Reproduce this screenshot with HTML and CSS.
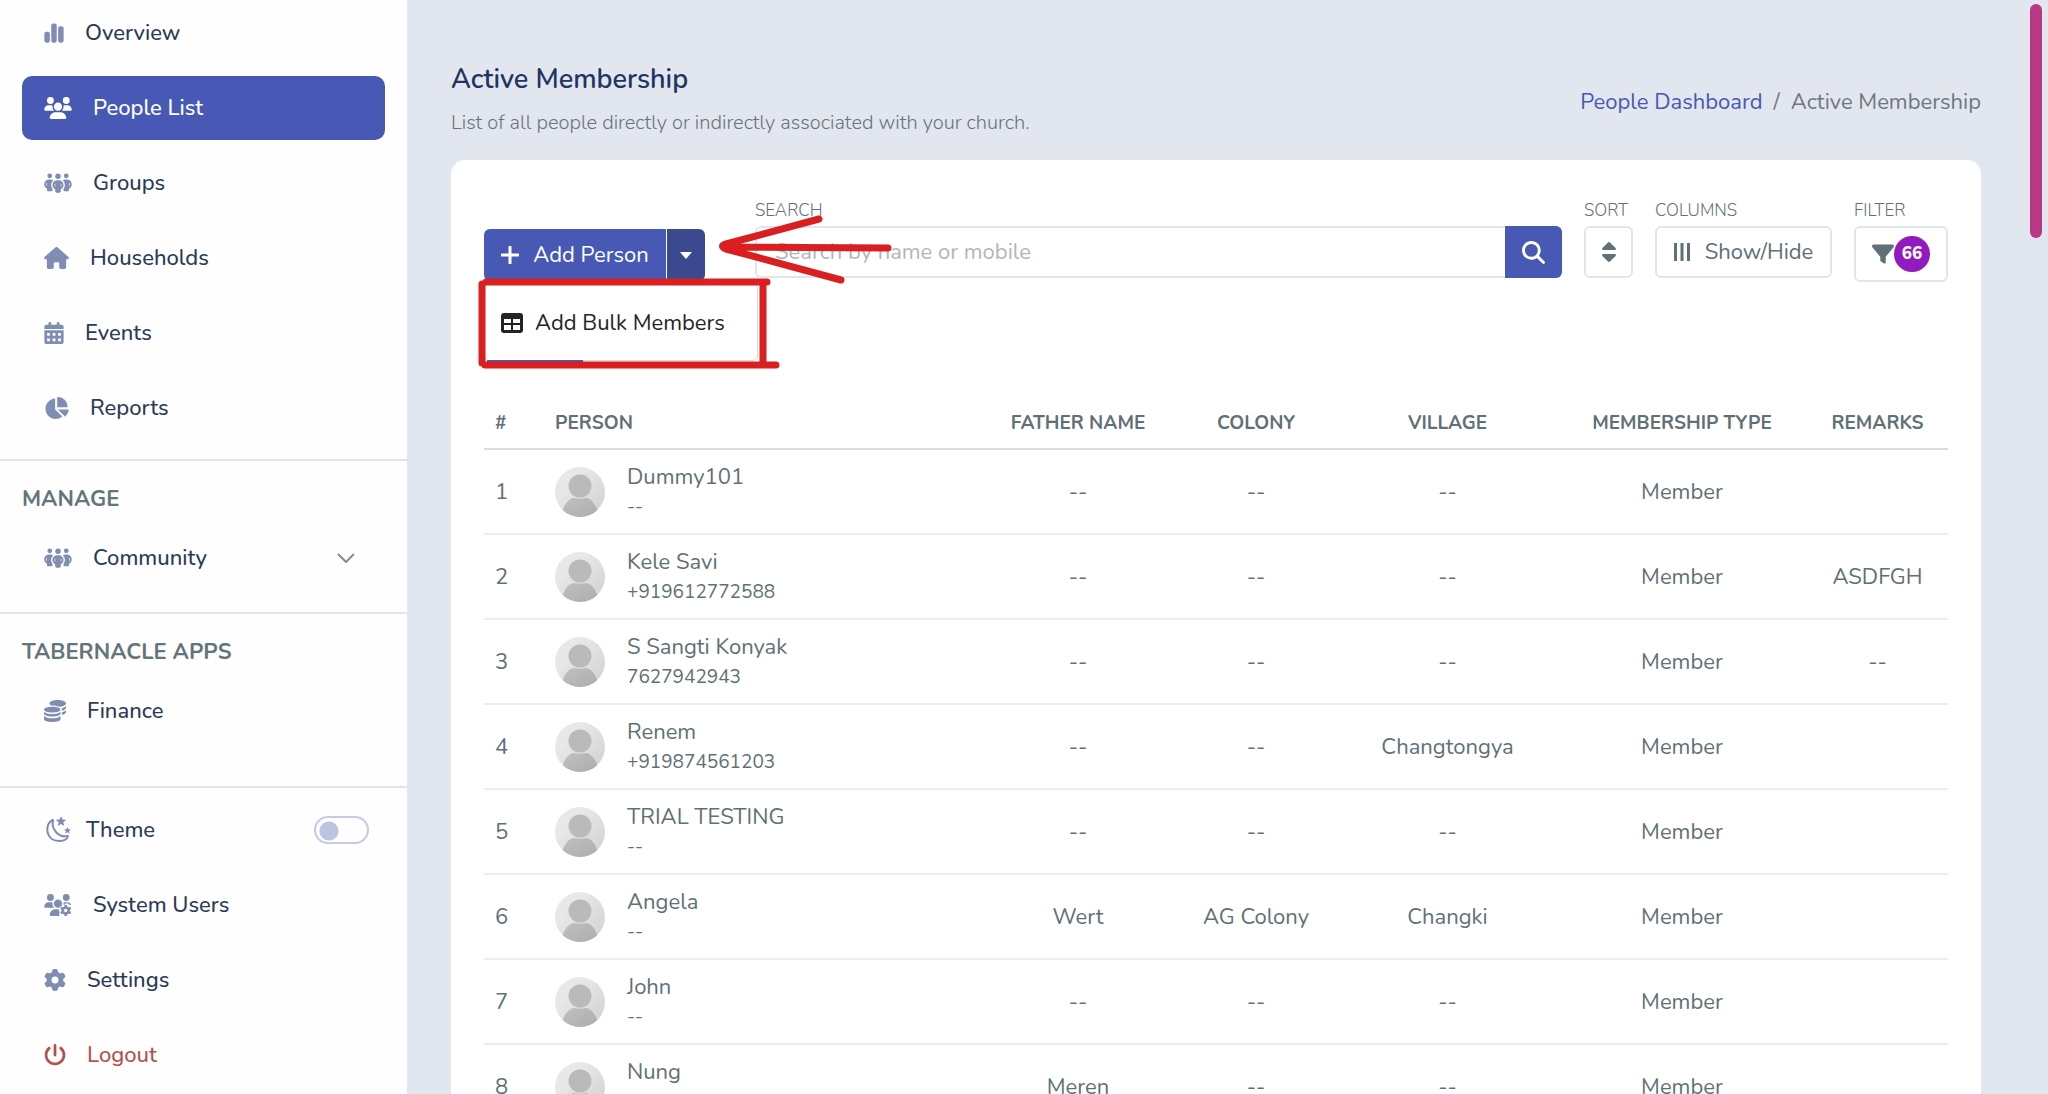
FILE: index.html
```html
<!DOCTYPE html>
<html lang="en">
<head>
    <meta charset="utf-8">
    <title>Active Membership</title>
    <link rel="stylesheet" href="styles.css">
</head>
<body>
    <!-- Icons shared by the page -->
    <svg class="sprite" aria-hidden="true">
        <defs>
            <linearGradient id="avatarBg" x1="0" y1="0" x2="1" y2="1">
                <stop offset="0.3" stop-color="#e8e8e8"/>
                <stop offset="1" stop-color="#d0d0d0"/>
            </linearGradient>
            <linearGradient id="avatarFg" x1="0" y1="0" x2="1" y2="1">
                <stop offset="0" stop-color="#c0c0c0"/>
                <stop offset="1" stop-color="#acacac"/>
            </linearGradient>
            <clipPath id="avatarClip"><circle cx="25" cy="25" r="25"/></clipPath>
        </defs>
        <symbol id="avatar" viewBox="0 0 50 50">
            <circle cx="25" cy="25" r="25" fill="url(#avatarBg)"/>
            <g clip-path="url(#avatarClip)">
                <circle cx="25" cy="19" r="11.5" fill="#bababa"/>
                <path fill="url(#avatarFg)" d="M7 46C9 37 14 31.500 19 31q6 1.500 12 0c5 .5 10 6 12 15l-8 6H15z"/>
            </g>
        </symbol>
        <symbol id="people-group" viewBox="0 0 640 512">
            <path d="M72 88a56 56 0 1 1 112 0A56 56 0 1 1 72 88zM64 245.7C54 256.9 48 271.8 48 288s6 31.100 16 42.300V245.700zm144.400-49.300C178.700 222.700 160 261.200 160 304c0 34.300 12 65.800 32 90.500V416c0 17.700-14.300 32-32 32H96c-17.700 0-32-14.300-32-32V389.200C26.200 371.200 0 332.700 0 288c0-61.900 50.100-112 112-112h32c24 0 46.200 7.500 64.400 20.300zM448 416V394.500c20-24.700 32-56.200 32-90.500c0-42.800-18.700-81.300-48.400-107.700C449.800 183.500 472 176 496 176h32c61.900 0 112 50.100 112 112c0 44.700-26.200 83.200-64 101.200V416c0 17.700-14.300 32-32 32H480c-17.700 0-32-14.300-32-32zm8-328a56 56 0 1 1 112 0A56 56 0 1 1 456 88zM576 245.700v84.700c10-11.300 16-26.100 16-42.300s-6-31.100-16-42.300zM320 32a64 64 0 1 1 0 128 64 64 0 1 1 0-128zM240 304c0 16.200 6 31 16 42.300V261.700c-10 11.300-16 26.100-16 42.300zm144-42.300v84.700c10-11.300 16-26.100 16-42.300s-6-31.100-16-42.300zM448 304c0 44.700-26.200 83.200-64 101.200V448c0 17.700-14.300 32-32 32H288c-17.700 0-32-14.300-32-32V405.200c-37.800-18-64-56.500-64-101.200c0-61.900 50.100-112 112-112h32c61.900 0 112 50.100 112 112z"/>
        </symbol>
    </svg>

    <div class="layout">
        <aside class="sidebar">
            <nav class="nav">
                <a href="#" class="nav-link">
                    <svg class="icon icon-sm" viewBox="0 0 448 512"><path d="M160 80c0-26.500 21.500-48 48-48h32c26.500 0 48 21.500 48 48v352c0 26.500-21.500 48-48 48h-32c-26.500 0-48-21.500-48-48V80zM0 272c0-26.500 21.500-48 48-48h32c26.500 0 48 21.500 48 48v160c0 26.500-21.500 48-48 48H48c-26.500 0-48-21.500-48-48V272zM368 96h32c26.500 0 48 21.500 48 48v288c0 26.500-21.500 48-48 48h-32c-26.500 0-48-21.500-48-48V144c0-26.500 21.500-48 48-48z"/></svg>
                    Overview
                </a>
                <a href="#" class="nav-link active">
                    <svg class="icon icon-xl" viewBox="0 0 640 512"><path d="M144 0a80 80 0 1 1 0 160A80 80 0 1 1 144 0zM512 0a80 80 0 1 1 0 160A80 80 0 1 1 512 0zM0 298.700C0 239.800 47.800 192 106.700 192h42.700c15.900 0 31 3.500 44.600 9.700c-1.300 7.200-1.900 14.700-1.900 22.300c0 38.200 16.800 72.500 43.300 96H21.300C9.600 320 0 310.400 0 298.700zM405.300 320c26.600-23.500 43.300-57.800 43.300-96c0-7.600-.7-15-1.900-22.300c13.600-6.300 28.700-9.700 44.600-9.700h42.700C592.200 192 640 239.800 640 298.700c0 11.800-9.600 21.300-21.300 21.300H405.300zM224 224a96 96 0 1 1 192 0 96 96 0 1 1 -192 0zM128 485.300C128 411.700 187.700 352 261.300 352H378.700C452.300 352 512 411.700 512 485.300c0 14.700-11.900 26.700-26.700 26.700H154.700c-14.700 0-26.700-11.900-26.700-26.700z"/></svg>
                    People List
                </a>
                <a href="#" class="nav-link">
                    <svg class="icon icon-xl"><use href="#people-group"/></svg>
                    Groups
                </a>
                <a href="#" class="nav-link">
                    <svg class="icon icon-lg" viewBox="0 0 576 512"><path d="M575.800 255.500c0 18-15 32.100-32 32.100h-32l.7 160.200c0 2.700-.2 5.400-.5 8.100V472c0 22.100-17.900 40-40 40H392c-22.100 0-40-17.900-40-40V384c0-17.700-14.300-32-32-32H256c-17.700 0-32 14.300-32 32v88c0 22.100-17.900 40-40 40H104c-22.100 0-40-17.900-40-40V287.600H32c-18 0-32-14-32-32.100c0-9 3-17 10-24L266.400 8c7-7 15-8 22-8s15 2 21 7L564.800 231.500c8 7 12 15 11 24z"/></svg>
                    Households
                </a>
                <a href="#" class="nav-link">
                    <svg class="icon icon-sm" viewBox="0 0 448 512"><path fill-rule="evenodd" d="M128 0c17.700 0 32 14.300 32 32v32h128V32c0-17.700 14.300-32 32-32s32 14.300 32 32v32h48c26.500 0 48 21.500 48 48v48H0v-48c0-26.500 21.500-48 48-48h48V32c0-17.700 14.300-32 32-32zM0 192h448v272c0 26.500-21.500 48-48 48H48c-26.500 0-48-21.500-48-48zM64 256v64h64v-64zM192 256v64h64v-64zM320 256v64h64v-64zM64 384v64h64v-64zM192 384v64h64v-64zM320 384v64h64v-64z"/></svg>
                    Events
                </a>
                <a href="#" class="nav-link">
                    <svg class="icon icon-lg" viewBox="0 0 576 512"><path d="M304 240V16.600c0-9 7-16.600 16-16.600C443.700 0 544 100.300 544 224c0 9-7.600 16-16.600 16H304zM32 272C32 150.700 122.100 50.300 239 34.300c9.200-1.300 17 6.100 17 15.400V288L412.500 444.500c6.700 6.700 6.200 17.700-1.500 23.100C371.800 495.600 323.800 512 272 512C139.500 512 32 404.600 32 272zm526.400 16c9.300 0 16.600 7.800 15.400 17c-7.700 55.900-34.600 105.600-73.900 142.300c-6 5.600-15.400 5.200-21.200-.7L320 288H558.400z"/></svg>
                    Reports
                </a>
            </nav>

            <div class="nav-section">
                <h2 class="nav-heading">MANAGE</h2>
                <a href="#" class="nav-link">
                    <svg class="icon icon-xl"><use href="#people-group"/></svg>
                    Community
                    <svg class="chevron" viewBox="0 0 18 10"><path d="M1 1l8 8 8-8"/></svg>
                </a>
            </div>

            <div class="nav-section apps">
                <h2 class="nav-heading">TABERNACLE APPS</h2>
                <a href="#" class="nav-link">
                    <svg class="icon" viewBox="0 0 512 512"><path d="M512 80c0 18-14.300 34.600-38.400 48c-29.100 16.100-72.500 27.500-122.300 30.900c-3.700-1.800-7.400-3.500-11.300-5C300.600 137.400 248.200 128 192 128c-8.300 0-16.400 .2-24.500 .6l-1.100-.6C142.300 114.600 128 98 128 80c0-44.200 86-80 192-80S512 35.800 512 80zM384 224c0 36-86 66-192 66S0 260 0 224s86-66 192-66 192 30 192 66zM0 274c36 36 108 54 192 54s156-18 192-54v40c0 40-86 72-192 72S0 354 0 314zM0 372c36 36 108 54 192 54s156-18 192-54v68c0 40-86 72-192 72S0 480 0 440zM416 190c40-9 74-24 96-44v34c0 30-37 55-96 69zM416 286c40-9 74-24 96-44v38c0 30-37 55-96 69z"/></svg>
                    Finance
                </a>
            </div>

            <div class="nav-section nav">
                <div class="nav-link">
                    <svg class="icon icon-theme" viewBox="0 0 27 30"><path class="moon" d="M9 5C0 8 1 27 16 26c4 0 7-2 8-5C15 23 7 15 9 5z"/><path d="M17 1l1.400 3.600 3.900.2-3 2.500 1 3.800L17 9l-3.300 2.100 1-3.800-3-2.500 3.900-.2zM23.500 12l1 2.300 2.500.2-1.900 1.600.6 2.400-2.200-1.300-2.200 1.300.6-2.400-1.900-1.600 2.500-.2z"/></svg>
                    <label for="themeSwitch">Theme</label>
                    <input type="checkbox" id="themeSwitch" class="switch">
                </div>
                <a href="#" class="nav-link">
                    <svg class="icon icon-xl" viewBox="0 0 640 512"><path fill-rule="evenodd" d="M144 0a80 80 0 1 1 0 160A80 80 0 1 1 144 0zM512 0a80 80 0 1 1 0 160A80 80 0 1 1 512 0zM0 298.700C0 239.800 47.800 192 106.700 192h42.700c15.900 0 31 3.500 44.600 9.700c-8 45 5 86 41.400 118.300H21.300C9.600 320 0 310.400 0 298.700zM446 202c14-6 29-10 45-10h43c40 0 74 18 92 50l-24 12-32-10-10-24h-70l-10 24-30 10zM224 224a96 96 0 1 1 192 0 96 96 0 1 1-192 0zM261 352h80c-9 28 3 48 26 64-22 22-27 50-10 96H155c-15 0-27-12-27-27 0-73 60-133 133-133zM472 256h56l8 40 24 14 38-13 28 48-30 27v24l30 27-28 48-38-13-24 14-8 40h-56l-8-40-24-14-38 13-28-48 30-27v-24l-30-27 28-48 38 13 24-14zM500 344a40 40 0 1 0 0 80 40 40 0 1 0 0-80z"/></svg>
                    System Users
                </a>
                <a href="#" class="nav-link">
                    <svg class="icon" viewBox="0 0 512 512"><path d="M495.900 166.600c3.200 8.700 .5 18.400-6.400 24.600l-43.300 39.400c1.100 8.300 1.700 16.800 1.700 25.400s-.6 17.100-1.700 25.400l43.300 39.400c6.900 6.200 9.600 15.900 6.400 24.600c-4.400 11.900-9.700 23.300-15.800 34.300l-4.700 8.100c-6.600 11-14 21.400-22.100 31.200c-5.900 7.200-15.700 9.600-24.500 6.800l-55.700-17.700c-13.400 10.300-28.200 18.900-44 25.400l-12.500 57.100c-2 9.100-9 16.300-18.200 17.800c-13.800 2.300-28 3.500-42.500 3.500s-28.700-1.200-42.500-3.500c-9.200-1.500-16.200-8.700-18.200-17.800l-12.500-57.100c-15.800-6.500-30.600-15.100-44-25.400L83.100 425.900c-8.800 2.800-18.600 .3-24.500-6.800c-8.100-9.800-15.500-20.200-22.100-31.200l-4.700-8.100c-6.100-11-11.400-22.400-15.800-34.300c-3.200-8.700-.5-18.400 6.400-24.600l43.300-39.400C64.600 273.100 64 264.600 64 256s.6-17.100 1.700-25.400L22.400 191.200c-6.900-6.200-9.600-15.900-6.400-24.600c4.400-11.900 9.700-23.300 15.800-34.300l4.700-8.100c6.600-11 14-21.400 22.100-31.200c5.900-7.200 15.700-9.600 24.500-6.800l55.700 17.700c13.400-10.300 28.200-18.900 44-25.400l12.500-57.100c2-9.100 9-16.300 18.200-17.800C227.300 1.200 241.500 0 256 0s28.700 1.200 42.500 3.500c9.200 1.500 16.200 8.700 18.200 17.800l12.500 57.100c15.800 6.500 30.600 15.100 44 25.400l55.700-17.700c8.800-2.800 18.600-.3 24.500 6.800c8.100 9.800 15.500 20.200 22.100 31.200l4.700 8.100c6.100 11 11.400 22.400 15.800 34.300zM256 336a80 80 0 1 0 0-160 80 80 0 1 0 0 160z"/></svg>
                    Settings
                </a>
                <a href="#" class="nav-link logout">
                    <svg class="icon" viewBox="0 0 512 512"><path d="M288 32c0-17.700-14.300-32-32-32s-32 14.300-32 32V256c0 17.700 14.300 32 32 32s32-14.300 32-32V32zM143.500 120.600c13.600-11.300 15.400-31.500 4.100-45.100s-31.500-15.400-45.100-4.100C49.700 115.400 16 181.800 16 256c0 132.500 107.500 240 240 240s240-107.500 240-240c0-74.200-33.800-140.600-86.600-184.600c-13.600-11.300-33.800-9.400-45.100 4.100s-9.400 33.800 4.100 45.100c38.900 32.300 63.500 81 63.500 135.400c0 97.200-78.800 176-176 176s-176-78.800-176-176c0-54.400 24.700-103.100 63.500-135.400z"/></svg>
                    Logout
                </a>
            </div>
        </aside>

        <main class="main">
            <header class="page-header">
                <div>
                    <h1>Active Membership</h1>
                    <p>List of all people directly or indirectly associated with your church.</p>
                </div>
                <nav class="breadcrumb">
                    <a href="#">People Dashboard</a>
                    <span>/</span>
                    <span>Active Membership</span>
                </nav>
            </header>

            <section class="card">
                <div class="toolbar">
                    <div class="add-group">
                        <button type="button" class="btn-add">
                            <svg class="plus" viewBox="0 0 18 18"><path d="M9 1v16M1 9h16"/></svg>
                            Add Person
                        </button>
                        <button type="button" class="btn-caret" aria-label="More options">
                            <svg viewBox="0 0 12 7"><path d="M0 0h12L6 7z"/></svg>
                        </button>
                        <div class="dropdown">
                            <a href="#" class="dropdown-item">
                                <svg viewBox="0 0 22 20"><path fill-rule="evenodd" d="M3 0h16a3 3 0 0 1 3 3v14a3 3 0 0 1-3 3H3a3 3 0 0 1-3-3V3a3 3 0 0 1 3-3zM3 6v4h7V6zM12 6v4h7V6zM3 12v5h7v-5zM12 12v5h7v-5z"/></svg>
                                Add Bulk Members
                            </a>
                        </div>
                    </div>

                    <div class="field search">
                        <label for="search">SEARCH</label>
                        <div class="search-box">
                            <input type="text" id="search" placeholder="Search by name or mobile">
                            <button type="button" aria-label="Search">
                                <svg viewBox="0 0 512 512"><path d="M416 208c0 45.900-14.900 88.300-40 122.700L502.600 457.400c12.500 12.500 12.500 32.800 0 45.300s-32.800 12.500-45.300 0L330.700 376c-34.400 25.200-76.800 40-122.700 40C93.100 416 0 322.900 0 208S93.100 0 208 0S416 93.100 416 208zM208 352a144 144 0 1 0 0-288 144 144 0 1 0 0 288z"/></svg>
                            </button>
                        </div>
                    </div>
                    <div class="field">
                        <label for="sortBtn">SORT</label>
                        <button type="button" id="sortBtn" class="btn-outline sort">
                            <svg viewBox="0 0 14 20"><path d="M1 8q-1.500-.5-.6-2L6 .5q1-.8 2 0L13.600 6q.9 1.500-.6 2zM1 12q-1.500.5-.6 2L6 19.500q1 .8 2 0l5.600-5.500q.9-1.500-.6-2z"/></svg>
                        </button>
                    </div>
                    <div class="field">
                        <label for="columnsBtn">COLUMNS</label>
                        <button type="button" id="columnsBtn" class="btn-outline columns">
                            <svg viewBox="0 0 16 18"><path d="M0 0h3v18H0zM6.500 0h3v18h-3zM13 0h3v18h-3z"/></svg>
                            Show/Hide
                        </button>
                    </div>
                    <div class="field">
                        <label for="filterBtn">FILTER</label>
                        <button type="button" id="filterBtn" class="btn-outline filter">
                            <svg viewBox="0 0 512 512"><path d="M3.900 54.900C10.500 40.900 24.500 32 40 32H472c15.500 0 29.500 8.900 36.100 22.900s4.600 30.500-5.200 42.500L320 320.900V448c0 12.100-6.800 23.200-17.700 28.600s-23.800 4.300-33.500-3l-64-48c-8.100-6-12.800-15.500-12.800-25.600V320.900L9 97.300C-.7 85.400-2.800 68.800 3.900 54.900z"/></svg>
                            <span class="badge">66</span>
                        </button>
                    </div>

                    <!-- Hand-drawn marks over the toolbar -->
                    <svg class="marks" viewBox="0 0 420 190" aria-hidden="true">
                        <path d="M338 59L245 84q-7 2 0 5L360 120M243 87L407 88"/>
                        <path d="M1 124V203M5 122H286M282 124V204M4 205H295"/>
                    </svg>
                </div>

                <table>
                    <colgroup>
                        <col class="col-num">
                        <col>
                        <col class="col-father">
                        <col class="col-colony">
                        <col class="col-village">
                        <col class="col-type">
                        <col class="col-remarks">
                    </colgroup>
                    <thead>
                        <tr><th>#</th><th>PERSON</th><th>FATHER NAME</th><th>COLONY</th><th>VILLAGE</th><th>MEMBERSHIP TYPE</th><th>REMARKS</th></tr>
                    </thead>
                    <tbody>
                        <tr>
                            <td>1</td>
                            <td><div class="person"><svg class="avatar"><use href="#avatar"/></svg><div><div class="name">Dummy101</div><div class="phone">--</div></div></div></td>
                            <td>--</td><td>--</td><td>--</td><td>Member</td><td></td>
                        </tr>
                        <tr>
                            <td>2</td>
                            <td><div class="person"><svg class="avatar"><use href="#avatar"/></svg><div><div class="name">Kele Savi</div><div class="phone">+919612772588</div></div></div></td>
                            <td>--</td><td>--</td><td>--</td><td>Member</td><td>ASDFGH</td>
                        </tr>
                        <tr>
                            <td>3</td>
                            <td><div class="person"><svg class="avatar"><use href="#avatar"/></svg><div><div class="name">S Sangti Konyak</div><div class="phone">7627942943</div></div></div></td>
                            <td>--</td><td>--</td><td>--</td><td>Member</td><td>--</td>
                        </tr>
                        <tr>
                            <td>4</td>
                            <td><div class="person"><svg class="avatar"><use href="#avatar"/></svg><div><div class="name">Renem</div><div class="phone">+919874561203</div></div></div></td>
                            <td>--</td><td>--</td><td>Changtongya</td><td>Member</td><td></td>
                        </tr>
                        <tr>
                            <td>5</td>
                            <td><div class="person"><svg class="avatar"><use href="#avatar"/></svg><div><div class="name">TRIAL TESTING</div><div class="phone">--</div></div></div></td>
                            <td>--</td><td>--</td><td>--</td><td>Member</td><td></td>
                        </tr>
                        <tr>
                            <td>6</td>
                            <td><div class="person"><svg class="avatar"><use href="#avatar"/></svg><div><div class="name">Angela</div><div class="phone">--</div></div></div></td>
                            <td>Wert</td><td>AG Colony</td><td>Changki</td><td>Member</td><td></td>
                        </tr>
                        <tr>
                            <td>7</td>
                            <td><div class="person"><svg class="avatar"><use href="#avatar"/></svg><div><div class="name">John</div><div class="phone">--</div></div></div></td>
                            <td>--</td><td>--</td><td>--</td><td>Member</td><td></td>
                        </tr>
                        <tr>
                            <td>8</td>
                            <td><div class="person"><svg class="avatar"><use href="#avatar"/></svg><div><div class="name">Nung</div><div class="phone">--</div></div></div></td>
                            <td>Meren</td><td>--</td><td>--</td><td>Member</td><td></td>
                        </tr>
                    </tbody>
                </table>
            </section>
            <div class="scroll-thumb"></div>
        </main>
    </div>
</body>
</html>
```
FILE: styles.css
```css
* {
    box-sizing: border-box;
}
body {
    margin: 0;
    font-family: Nunito, Lato, sans-serif;
    font-size: 22px;
    line-height: 30px;
    color: #5f7076;
    background-color: #e2e6ee;
}
a {
    text-decoration: none;
    color: inherit;
}
button, input {
    font: inherit;
    color: inherit;
}
button {
    cursor: pointer;
}
svg {
    fill: currentColor;
    flex-shrink: 0;
}
.sprite {
    position: absolute;
    width: 0;
    height: 0;
}
.layout {
    display: flex;
    height: 100vh;
    overflow: hidden;
}

/* Sidebar */
.sidebar {
    width: 407px;
    flex-shrink: 0;
    background-color: #fefefe;
    overflow: hidden;
}
.nav {
    display: flex;
    flex-direction: column;
    gap: 11px;
}
.sidebar > .nav:first-child {
    padding-top: 1px;
    margin-bottom: 19px;
}
.nav-link {
    display: flex;
    align-items: center;
    gap: 21px;
    height: 64px;
    margin: 0 22px;
    padding: 0 22px;
    border-radius: 10px;
    color: #2b3b58;
    font-weight: 500;
}
.nav-link.active {
    background-color: #4759b4;
    color: #fff;
}
.nav-link.logout {
    color: #b5504f;
}
.icon {
    width: 22px;
    height: 22px;
    color: #7f8db3;
}
.icon-sm {
    width: 20px;
}
.icon-lg {
    width: 25px;
}
.icon-xl {
    width: 28px;
}
.icon-theme {
    width: 27px;
    height: 30px;
    margin-right: -6px;
}
.moon {
    fill: none;
    stroke: currentColor;
    stroke-width: 2;
    stroke-linejoin: round;
}
.active .icon, .logout .icon {
    color: inherit;
}
.chevron {
    width: 18px;
    height: 10px;
    margin-left: auto;
    margin-right: 8px;
    fill: none;
    stroke: #858d92;
    stroke-width: 2;
}
.nav-section {
    border-top: 2px solid #e2e5e8;
    padding-top: 23px;
    height: 153px;
}
.nav-section.apps {
    height: 174px;
}
.nav-section.nav {
    height: auto;
    padding-top: 10px;
}
.nav-heading {
    margin: 0 22px 12px;
    font-size: 22px;
    line-height: 30px;
    font-weight: 700;
    color: #64757a;
}
.switch {
    appearance: none;
    width: 55px;
    height: 28px;
    margin: 0 -6px 0 auto;
    border: 2px solid #c5cbe3;
    border-radius: 14px;
    background: radial-gradient(circle at 13px 13px, #bcc4e1 9px, transparent 10px);
}

/* Page header */
.main {
    flex: 1;
    padding: 0 67px 0 44px;
}
.page-header {
    display: flex;
    justify-content: space-between;
    align-items: center;
    height: 160px;
    padding-top: 43px;
}
.page-header > div {
    align-self: flex-start;
    padding-top: 20px;
}
h1 {
    margin: 0 0 12px;
    font-size: 27px;
    line-height: 34px;
    font-weight: 600;
    color: #223562;
}
.page-header p {
    margin: 0;
    font-size: 20px;
    line-height: 28px;
    font-weight: 300;
    color: #69737b;
}
.breadcrumb {
    display: flex;
    gap: 11px;
    color: #6f7880;
}
.breadcrumb a {
    color: #4759b4;
}

/* Card and toolbar */
.card {
    min-height: 100vh;
    padding: 33px 33px 0;
    border-radius: 14px;
    background-color: #fff;
}
.toolbar {
    position: relative;
    display: flex;
    align-items: flex-start;
    gap: 22px;
    height: 204px;
}
.add-group {
    position: relative;
    display: flex;
    width: 221px;
    height: 52px;
    margin: 36px 28px 0 0;
    color: #fff;
}
.add-group button {
    display: flex;
    align-items: center;
    justify-content: center;
    border: 0;
    background-color: #4759b4;
    padding: 0;
}
.add-group .btn-add {
    flex: 1;
    gap: 14px;
    border-radius: 6px 0 0 6px;
}
.add-group .btn-caret {
    width: 39px;
    border-left: 1px solid #fff;
    border-radius: 0 6px 6px 0;
    background-color: #3b4a90;
}
.btn-caret svg {
    width: 12px;
    height: 7px;
}
.plus {
    width: 18px;
    height: 18px;
    stroke: currentColor;
    stroke-width: 3;
    stroke-linecap: round;
}
.dropdown {
    position: absolute;
    top: 54px;
    left: 0;
    width: 274px;
    height: 78px;
    border: 1px solid #d5d9e0;
    border-radius: 6px;
    background-color: #fff;
}
.dropdown::after {
    content: "";
    position: absolute;
    left: 2px;
    bottom: -2px;
    width: 96px;
    height: 2px;
    background-color: #4759b4;
}
.dropdown-item {
    display: flex;
    align-items: center;
    gap: 12px;
    height: 78px;
    padding-left: 16px;
    color: #1f2427;
}
.dropdown-item svg {
    width: 22px;
    height: 20px;
}
.field label {
    display: block;
    padding-top: 6px;
    margin-bottom: 3px;
    font-size: 17px;
    line-height: 24px;
    font-weight: 300;
}
.search {
    flex: 1;
}
.search-box {
    display: flex;
    height: 52px;
}
.search-box input {
    flex: 1;
    min-width: 0;
    padding: 0 18px;
    border: 2px solid #e2e6ec;
    border-right: 0;
    border-radius: 6px 0 0 6px;
    background-color: #fff;
}
.search-box input::placeholder {
    color: #b0b7bc;
}
.search-box button {
    width: 57px;
    padding: 0;
    border: 0;
    border-radius: 0 6px 6px 0;
    background-color: #4759b4;
    color: #fff;
}
.search-box svg {
    display: block;
    width: 23px;
    height: 23px;
    margin: auto;
}
.btn-outline {
    display: flex;
    align-items: center;
    justify-content: center;
    height: 52px;
    padding: 0;
    border: 2px solid #e3e5e9;
    border-radius: 6px;
    background-color: #fff;
}
.sort {
    width: 49px;
}
.sort svg {
    width: 14px;
    height: 20px;
}
.columns {
    gap: 15px;
    width: 177px;
}
.columns svg {
    width: 16px;
    height: 18px;
}
.filter {
    width: 94px;
    height: 56px;
}
.filter svg {
    width: 22px;
    height: 22px;
}
.badge {
    width: 36px;
    height: 36px;
    border-radius: 50%;
    background-color: #911bbf;
    color: #fff;
    font-size: 17px;
    line-height: 36px;
    font-weight: 800;
}
.marks {
    position: absolute;
    top: -33px;
    left: -3px;
    width: 420px;
    height: 190px;
    overflow: visible;
    fill: none;
    stroke: #d91f1f;
    stroke-width: 7;
    stroke-linecap: round;
    stroke-linejoin: round;
    pointer-events: none;
}

/* Members table */
table {
    width: 100%;
    table-layout: fixed;
    border-collapse: collapse;
    text-align: center;
}
.col-num {
    width: 60px;
}
.col-father {
    width: 192px;
}
.col-colony {
    width: 164px;
}
.col-village {
    width: 219px;
}
.col-type {
    width: 250px;
}
.col-remarks {
    width: 141px;
}
th, td {
    padding: 0 11px;
    border-bottom: 2px solid #ebedef;
}
th {
    height: 52px;
    font-size: 19px;
    font-weight: 700;
    border-bottom-color: #d9dcdf;
}
td {
    height: 85px;
}
th:nth-child(-n+2), td:nth-child(-n+2) {
    text-align: left;
}
.person {
    display: flex;
    align-items: center;
    gap: 22px;
}
.avatar {
    width: 50px;
    height: 50px;
}
.phone {
    font-size: 19px;
}
.scroll-thumb {
    position: fixed;
    top: 4px;
    right: 6px;
    width: 12px;
    height: 234px;
    border-radius: 6px;
    background-color: #b93886;
}
```
